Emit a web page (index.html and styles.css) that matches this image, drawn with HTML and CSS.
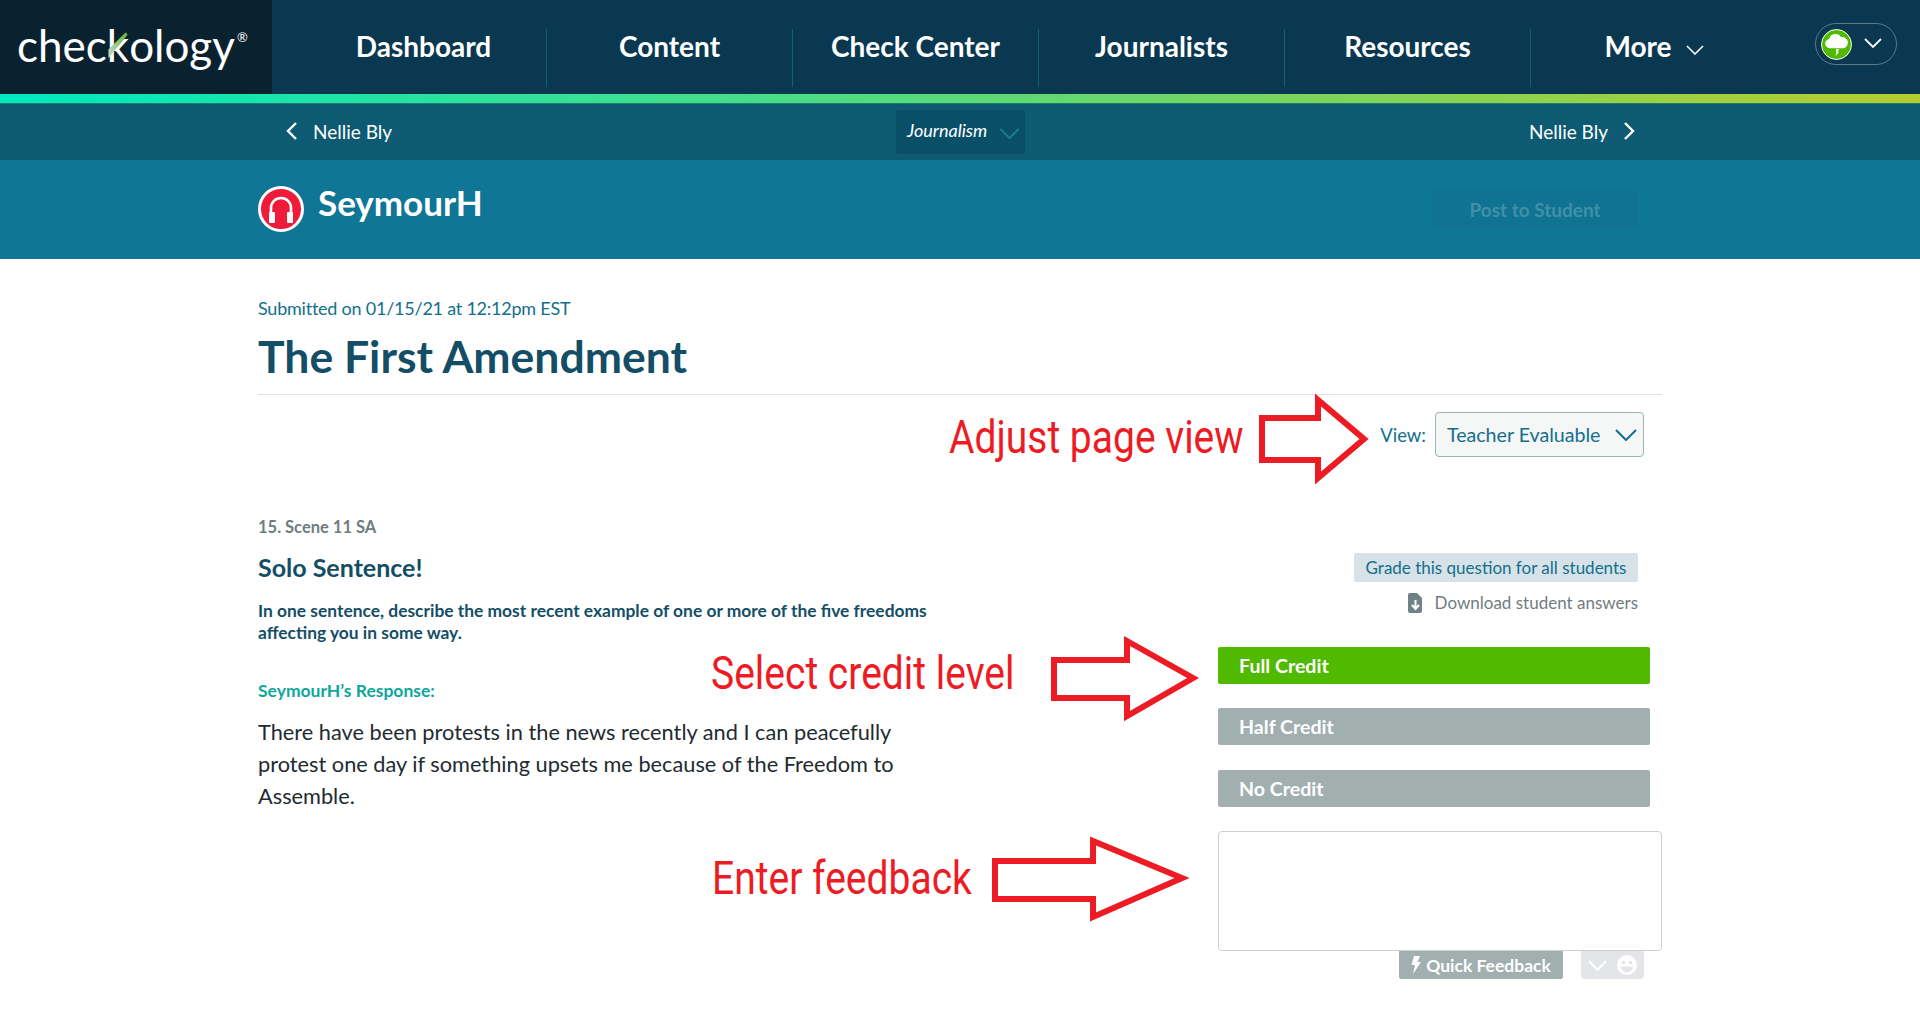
FILE: index.html
```html
<!DOCTYPE html>
<html lang="en">
<head>
   <meta charset="UTF-8">
   <meta name="viewport" content="width=device-width, initial-scale=1.0">
   <title>Checkology</title>
   <link rel="stylesheet" href="styles.css">
</head>

<body>

   <!-- Top Nav -->
   <header class="topbar">
       <a class="logo">chec<span class="logo-k">k<svg class="logo-check" viewBox="0 0 30 40"><defs><linearGradient id="chk" x1="0" y1="1" x2="1" y2="0"><stop offset="0" stop-color="#c5dcd0"/><stop offset="1" stop-color="#62b82e"/></linearGradient></defs><path d="M4 34 L4 24 L24 4 L26 7 L7 30 Z" fill="url(#chk)"/></svg></span>ology<sup class="logo-reg">®</sup></a>
       <nav class="nav">
           <a class="nav-item">Dashboard</a>
           <a class="nav-item">Content</a>
           <a class="nav-item">Check Center</a>
           <a class="nav-item">Journalists</a>
           <a class="nav-item">Resources</a>
           <a class="nav-item">More
               <svg class="nav-chevron" viewBox="0 0 18 10"><path d="M1 1 L9 9 L17 1" fill="none" stroke="#fff" stroke-width="1.6"/></svg>
           </a>
       </nav>
       <div class="user-pill">
           <span class="user-avatar">
               <svg viewBox="0 0 32 32"><path d="M9 20 a5 5 0 0 1 -1 -10 a7 7 0 0 1 13 -2 a6 6 0 0 1 3 12 Z" fill="#fff"/><path d="M16 21 h3 l-2 3 h2 l-4 5 l1 -5 h-1 Z" fill="#fff"/></svg>
           </span>
           <svg class="user-chevron" viewBox="0 0 18 10"><path d="M1 1 L9 9 L17 1" fill="none" stroke="#fff" stroke-width="1.8"/></svg>
       </div>
   </header>
   <div class="rainbow"></div>

   <!-- Sub Nav -->
   <div class="subnav">
       <a class="subnav-link">
           <svg class="subnav-arrow" viewBox="0 0 12 18"><path d="M10 1 L2 9 L10 17" fill="none" stroke="#fff" stroke-width="2.4"/></svg>
           Nellie Bly
       </a>
       <div class="subject">
           <em class="subject-name">Journalism</em>
           <svg class="subject-chevron" viewBox="0 0 22 12"><path d="M1 1 L11 11 L21 1" fill="none" stroke="#1d7d96" stroke-width="2"/></svg>
       </div>
       <a class="subnav-link">
           Nellie Bly
           <svg class="subnav-arrow" viewBox="0 0 12 18"><path d="M2 1 L10 9 L2 17" fill="none" stroke="#fff" stroke-width="2.4"/></svg>
       </a>
   </div>

   <!-- Student Header -->
   <div class="student-bar">
       <div class="student">
           <span class="student-avatar">
               <svg viewBox="0 0 40 40"><path d="M10 27 V19 a10 10 0 0 1 20 0 V27" fill="none" stroke="#fff" stroke-width="2.6"/><rect x="8" y="23" width="6" height="11" rx="1" fill="#fff"/><rect x="26" y="23" width="6" height="11" rx="1" fill="#fff"/></svg>
           </span>
           <span class="student-name">SeymourH</span>
       </div>
       <button class="post-btn">Post to Student</button>
   </div>

   <!-- Main Content -->
   <main class="page">
       <p class="submitted">Submitted on 01/15/21 at 12:12pm EST</p>
       <h1 class="title">The First Amendment</h1>

       <div class="view-row">
           <span class="view-label">View:</span>
           <div class="view-select">
               Teacher Evaluable
               <svg class="view-chevron" viewBox="0 0 22 12"><path d="M1 1 L11 11 L21 1" fill="none" stroke="#12708c" stroke-width="2"/></svg>
           </div>
       </div>

       <div class="question">
           <div class="question-left">
               <p class="question-num">15. Scene 11 SA</p>
               <h2 class="question-title">Solo Sentence!</h2>
               <p class="question-prompt">In one sentence, describe the most recent example of one or more of the five freedoms affecting you in some way.</p>
               <p class="response-label">SeymourH’s Response:</p>
               <p class="response-text">There have been protests in the news recently and I can peacefully protest one day if something upsets me because of the Freedom to Assemble.</p>
           </div>

           <div class="question-right">
               <button class="grade-all">Grade this question for all students</button>
               <a class="download">
                   <svg class="download-icon" viewBox="0 0 16 20"><path d="M1 2 a2 2 0 0 1 2 -2 H10 L15 5 V18 a2 2 0 0 1 -2 2 H3 a2 2 0 0 1 -2 -2 Z" fill="#6f8285"/><path d="M8.5 7 V15 M5 12 L8.5 16 L12 12" fill="none" stroke="#fff" stroke-width="2"/></svg>
                   Download student answers
               </a>
               <button class="credit credit-full">Full Credit</button>
               <button class="credit credit-half">Half Credit</button>
               <button class="credit">No Credit</button>
               <textarea class="feedback"></textarea>
               <div class="feedback-tools">
                   <button class="quick">
                       <svg class="quick-icon" viewBox="0 0 10 18"><path d="M3 0 H9 L6.5 6 H10 L2 18 L4 9 H0.5 Z" fill="#fff"/></svg>
                       Quick Feedback
                   </button>
                   <div class="emoji-btn">
                       <svg class="emoji-chevron" viewBox="0 0 20 11"><path d="M1 1 L10 10 L19 1" fill="none" stroke="#fff" stroke-width="2"/></svg>
                       <svg class="emoji-face" viewBox="0 0 20 20"><circle cx="10" cy="10" r="10" fill="#fff"/><circle cx="6.5" cy="7.5" r="1.8" fill="#e4e5e8"/><circle cx="13.5" cy="7.5" r="1.8" fill="#e4e5e8"/><path d="M4 11.5 H16 A6 6 0 0 1 4 11.5 Z" fill="#e4e5e8"/></svg>
                   </div>
               </div>
           </div>
       </div>
   </main>

   <!-- Red annotations on top of the page -->
   <span class="note note-view">Adjust page view</span>
   <svg class="arrow arrow-view" viewBox="0 0 110 90"><path d="M3 24 H59 V6 L105 45 L59 84 V66 H3 Z" fill="#fff" stroke="#ed1c24" stroke-width="6" stroke-miterlimit="10"/></svg>
   <span class="note note-credit">Select credit level</span>
   <svg class="arrow arrow-credit" viewBox="0 0 145 87"><path d="M3 25 H76 V6 L142 43 L76 81 V63 H3 Z" fill="#fff" stroke="#ed1c24" stroke-width="6" stroke-miterlimit="10"/></svg>
   <span class="note note-feedback">Enter feedback</span>
   <svg class="arrow arrow-feedback" viewBox="0 0 193 88"><path d="M3 26 H101 V6 L190 43 L101 82 V64 H3 Z" fill="#fff" stroke="#ed1c24" stroke-width="6" stroke-miterlimit="10"/></svg>

</body>
</html>
```

FILE: styles.css
```css
* {
    box-sizing: border-box;
}
body {
    margin: 0;
    font-family: Lato, "Open Sans", sans-serif;
    background-color: #fff;
    position: relative;
    min-height: 1031px;
    overflow-x: hidden;
}
p, h1, h2 {
    margin: 0;
}
button {
    font-family: inherit;
    border: none;
    cursor: pointer;
}

/* top nav */
.topbar {
    display: flex;
    align-items: stretch;
    height: 94px;
    background-color: #0a3850;
}
.logo {
    width: 272px;
    padding-left: 17px;
    background-color: #0a2230;
    color: #fff;
    font-family: Lato, sans-serif;
    font-weight: 400;
    font-size: 44px;
    line-height: 90px;
    white-space: nowrap;
}
.logo-k {
    position: relative;
}
.logo-check {
    position: absolute;
    left: -2px;
    top: 9px;
    width: 26px;
    height: 36px;
}
.logo-reg {
    font-size: 13px;
    vertical-align: 20px;
    line-height: 0;
    margin-left: 2px;
}
.nav {
    display: flex;
    margin-left: 29px;
    padding-top: 29px;
    height: 87px;
}
.nav-item {
    width: 246px;
    height: 58px;
    border-right: 1px solid #14606e;
    color: #fff;
    font-size: 28px;
    font-weight: 700;
    display: flex;
    align-items: center;
    justify-content: center;
    gap: 14px;
    padding-bottom: 24px;
}
.nav-item:last-child {
    border-right: none;
}
.nav-chevron {
    width: 18px;
    height: 10px;
    margin-top: 8px;
}
.user-pill {
    margin: 23px 0 0 38px;
    width: 82px;
    height: 42px;
    border: 1px solid #5a7a88;
    border-radius: 21px;
    display: flex;
    align-items: center;
    padding-left: 5px;
    gap: 12px;
}
.user-avatar {
    width: 31px;
    height: 31px;
    border-radius: 50%;
    background-color: #4fba00;
    border: 1px solid #fff;
    display: flex;
}
.user-chevron {
    width: 18px;
    height: 10px;
    margin-top: -3px;
}
.rainbow {
    height: 10px;
    background: linear-gradient(to right, #00e8c0, #b5cc30);
    border-bottom: 1px solid #1a8068;
}

/* sub nav */
.subnav {
    height: 56px;
    background-color: #0d5a72;
    display: flex;
    align-items: center;
    justify-content: space-between;
    padding: 0 285px 0 286px;
    color: #fff;
    position: relative;
}
.subnav-link {
    display: flex;
    align-items: center;
    gap: 15px;
    font-size: 19px;
    width: 150px;
    margin-top: -2px;
}
.subnav-link:last-child {
    justify-content: flex-end;
}
.subnav-arrow {
    width: 12px;
    height: 18px;
}
.subject {
    width: 129px;
    height: 44px;
    background-color: #0a4f68;
    border-radius: 3px;
    display: flex;
    align-items: center;
    padding-left: 11px;
    gap: 12px;
    font-size: 18px;
}
.subject-name {
    margin-top: -4px;
}
.subject-chevron {
    width: 21px;
    height: 11px;
    margin-top: 3px;
}

/* student bar */
.student-bar {
    height: 99px;
    background-color: #0f7696;
    padding: 0 282px 0 258px;
    display: flex;
    justify-content: space-between;
    color: #fff;
}
.student {
    display: flex;
    gap: 14px;
    padding-top: 26px;
}
.student-avatar {
    width: 46px;
    height: 46px;
    border-radius: 50%;
    border: 3px solid #fff;
    background-color: #ee1c3a;
    display: flex;
}
.student-name {
    font-size: 35px;
    font-weight: 700;
    line-height: 38px;
    margin-top: -3px;
}
.post-btn {
    width: 206px;
    height: 39px;
    margin-top: 30px;
    background-color: #107391;
    color: #3f90aa;
    font-size: 19px;
    font-weight: 700;
}

/* main */
.page {
    margin-left: 258px;
    width: 1404px;
    padding-top: 37px;
}
.submitted {
    color: #12708c;
    font-size: 18px;
    letter-spacing: -0.23px;
    line-height: 24px;
}
.title {
    color: #144e66;
    font-size: 44.5px;
    font-weight: 700;
    line-height: 50px;
    margin-top: 11px;
    padding-bottom: 13px;
    border-bottom: 1px solid #d8e2e6;
}
.view-row {
    display: flex;
    justify-content: flex-end;
    align-items: center;
    gap: 9px;
    margin-top: 17px;
    padding-right: 18px;
}
.view-label {
    color: #12708c;
    font-size: 18.5px;
}
.view-select {
    width: 209px;
    height: 45px;
    background-color: #f5f6f6;
    border: 1px solid #9db3b5;
    border-radius: 4px;
    color: #12708c;
    font-size: 19.6px;
    display: flex;
    align-items: center;
    justify-content: space-between;
    padding: 0 6px 0 11px;
}
.view-chevron {
    width: 22px;
    height: 12px;
}
.question {
    display: flex;
    justify-content: space-between;
    margin-top: 60px;
}
.question-left {
    width: 680px;
}
.question-num {
    color: #6f7d80;
    font-size: 16.5px;
    font-weight: 700;
    line-height: 20px;
}
.question-title {
    color: #144e66;
    font-size: 25px;
    font-weight: 700;
    line-height: 28px;
    margin-top: 16px;
}
.question-prompt {
    color: #144e66;
    font-size: 17.4px;
    font-weight: 700;
    line-height: 22px;
    margin-top: 19px;
}
.response-label {
    color: #0fa79a;
    font-size: 17.5px;
    font-weight: 700;
    line-height: 20px;
    margin-top: 37px;
}
.response-text {
    color: #222b30;
    font-size: 21.75px;
    line-height: 32px;
    margin-top: 15px;
}
.question-right {
    width: 444px;
    padding-top: 36px;
    display: flex;
    flex-direction: column;
    align-items: flex-start;
}
.grade-all {
    align-self: flex-end;
    margin-right: 24px;
    width: 284px;
    height: 29px;
    background-color: #d6e2e8;
    color: #12708c;
    font-size: 17px;
    border-radius: 2px;
}
.download {
    align-self: flex-end;
    margin: 11px 24px 0 0;
    color: #6f7d80;
    font-size: 17px;
    line-height: 20px;
    display: flex;
    align-items: center;
    gap: 12px;
}
.download-icon {
    width: 16px;
    height: 20px;
}
.credit {
    width: 432px;
    height: 37px;
    margin-bottom: 24px;
    padding-left: 21px;
    text-align: left;
    background-color: #a1afaf;
    color: #fff;
    font-size: 19.6px;
    font-weight: 700;
    border-radius: 2px;
}
.credit-full {
    margin-top: 34px;
    background-color: #4fba00;
}
.credit-half {
    margin-bottom: 25px;
}
.feedback {
    width: 444px;
    height: 120px;
    border: 1px solid #cfcfcf;
    border-radius: 4px;
    resize: none;
    display: block;
}
.feedback-tools {
    align-self: flex-end;
    display: flex;
    gap: 18px;
    padding-right: 18px;
}
.quick {
    width: 164px;
    height: 28px;
    background-color: #a1afaf;
    color: #fff;
    font-size: 17.5px;
    font-weight: 700;
    border-radius: 0 0 2px 2px;
    display: flex;
    align-items: center;
    justify-content: center;
    gap: 5px;
}
.quick-icon {
    width: 10px;
    height: 18px;
}
.emoji-btn {
    width: 63px;
    height: 28px;
    background-color: #e4e5e8;
    border-radius: 0 0 4px 4px;
    display: flex;
    align-items: center;
    justify-content: space-between;
    padding: 0 7px;
}
.emoji-chevron {
    width: 19px;
    height: 11px;
}
.emoji-face {
    width: 20px;
    height: 20px;
}

/* annotations */
.note {
    position: absolute;
    color: #ed1c24;
    font-family: Roboto, sans-serif;
    font-size: 46px;
    line-height: 54px;
    white-space: nowrap;
    transform: scaleX(0.848);
    transform-origin: left center;
}
.note-view {
    left: 949px;
    top: 410px;
}
.note-credit {
    left: 711px;
    top: 646px;
}
.note-feedback {
    left: 712px;
    top: 851px;
}
.arrow {
    position: absolute;
    overflow: visible;
}
.arrow-view {
    left: 1259px;
    top: 394px;
    width: 110px;
    height: 90px;
}
.arrow-credit {
    left: 1051px;
    top: 635px;
    width: 145px;
    height: 87px;
}
.arrow-feedback {
    left: 992px;
    top: 835px;
    width: 193px;
    height: 88px;
}
```
